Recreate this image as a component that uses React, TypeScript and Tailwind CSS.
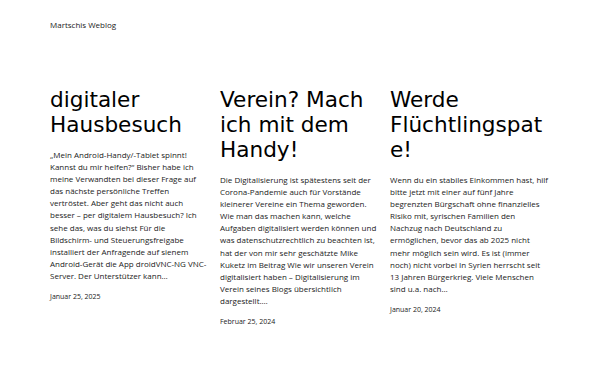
import React from "react";

const posts = [
  {
    title: "digitaler Hausbesuch",
    body: "„Mein Android-Handy/-Tablet spinnt! Kannst du mir helfen?“ Bisher habe ich meine Verwandten bei dieser Frage auf das nächste persönliche Treffen vertröstet. Aber geht das nicht auch besser – per digitalem Hausbesuch? Ich sehe das, was du siehst Für die Bildschirm- und Steuerungsfreigabe installiert der Anfragende auf sienem Android-Gerät die App droidVNC-NG VNC-Server. Der Unterstützer kann…",
    date: "Januar 25, 2025",
  },
  {
    title: "Verein? Mach ich mit dem Handy!",
    body: "Die Digitalisierung ist spätestens seit der Corona-Pandemie auch für Vorstände kleinerer Vereine ein Thema geworden. Wie man das machen kann, welche Aufgaben digitalisiert werden können und was datenschutzrechtlich zu beachten ist, hat der von mir sehr geschätzte Mike Kuketz im Beitrag Wie wir unseren Verein digitalisiert haben – Digitalisierung im Verein seines Blogs übersichtlich dargestellt.…",
    date: "Februar 25, 2024",
  },
  {
    title: "Werde Flüchtlingspate!",
    body: "Wenn du ein stabiles Einkommen hast, hilf bitte jetzt mit einer auf fünf Jahre begrenzten Bürgschaft ohne finanzielles Risiko mit, syrischen Familien den Nachzug nach Deutschland zu ermöglichen, bevor das ab 2025 nicht mehr möglich sein wird. Es ist (immer noch) nicht vorbei In Syrien herrscht seit 13 Jahren Bürgerkrieg. Viele Menschen sind u.a. nach…",
    date: "Januar 20, 2024",
  },
  { title: "Alles künstlich", body: "", date: "" },
  { title: "Hey, Alter, lass", body: "", date: "" },
  { title: "Ich brauch' /", body: "", date: "" },
];

export default function App() {
  return (
    <div className="w-[600px] h-[375px] overflow-hidden bg-white text-[#111]">
      <header className="px-[50px] pt-[19px] h-[87px]">
        <div className="text-[8px] leading-[12px] text-[#222]" style={{ fontFamily: '"Open Sans", sans-serif' }}>
          Martschis Weblog
        </div>
      </header>
      <main className="px-[50px] grid grid-cols-[170px_170px_159.5px] gap-y-[43px]">
        {posts.map((p, i) => (
          <article key={i} className={`flex flex-col ${i % 3 === 0 ? "pr-[12px]" : i % 3 === 1 ? "pr-[10.5px]" : ""}`}>
            <h2
              className="text-[21.6px] leading-[25px] text-black break-words"
              style={{ fontFamily: '"DejaVu Sans", sans-serif' }}
            >
              {p.title}
            </h2>
            {p.body && (
              <p
                className="mt-[12px] text-[8px] leading-[12.1px] text-[#222]"
                style={{ fontFamily: '"Open Sans", sans-serif' }}
              >
                {p.body}
              </p>
            )}
            {p.date && (
              <div
                className="mt-[9px] text-[7px] leading-[12px] text-[#222]"
                style={{ fontFamily: '"Open Sans", sans-serif' }}
              >
                {p.date}
              </div>
            )}
          </article>
        ))}
      </main>
    </div>
  );
}
